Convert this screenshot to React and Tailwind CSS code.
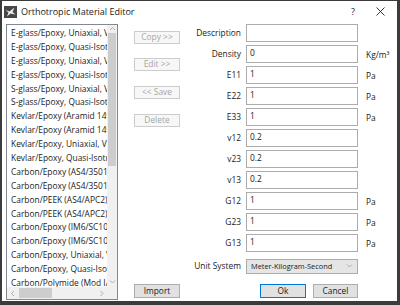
import React from 'react'

const materials = [
  'E-glass/Epoxy, Uniaxial, Vf=0.55',
  'E-glass/Epoxy, Quasi-Isotropic',
  'E-glass/Epoxy, Uniaxial, Vf=0.45',
  'E-glass/Epoxy, Quasi-Isotropic',
  'S-glass/Epoxy, Uniaxial, Vf=0.50',
  'S-glass/Epoxy, Quasi-Isotropic',
  'Kevlar/Epoxy (Aramid 149/Epoxy)',
  'Kevlar/Epoxy (Aramid 149/Epoxy)',
  'Kevlar/Epoxy, Uniaxial, Vf=0.60',
  'Kevlar/Epoxy, Quasi-Isotropic',
  'Carbon/Epoxy (AS4/3501-6)',
  'Carbon/Epoxy (AS4/3501-6)',
  'Carbon/PEEK (AS4/APC2), Uniaxial',
  'Carbon/PEEK (AS4/APC2), Quasi',
  'Carbon/Epoxy (IM6/SC1081)',
  'Carbon/Epoxy (IM6/SC1081)',
  'Carbon/Epoxy, Uniaxial, Vf=0.60',
  'Carbon/Epoxy, Quasi-Isotropic',
  'Carbon/Polymide (Mod I/WR-6)',
]

const fields = [
  { label: 'Description', value: '', unit: '' },
  { label: 'Density', value: '0', unit: 'Kg/m³' },
  { label: 'E11', value: '1', unit: 'Pa' },
  { label: 'E22', value: '1', unit: 'Pa' },
  { label: 'E33', value: '1', unit: 'Pa' },
  { label: 'v12', value: '0.2', unit: '' },
  { label: 'v23', value: '0.2', unit: '' },
  { label: 'v13', value: '0.2', unit: '' },
  { label: 'G12', value: '1', unit: 'Pa' },
  { label: 'G23', value: '1', unit: 'Pa' },
  { label: 'G13', value: '1', unit: 'Pa' },
]

function Chevron({ dir }) {
  const d = {
    up: 'M1 4 L3.5 1.5 L6 4',
    down: 'M1 1.5 L3.5 4 L6 1.5',
    left: 'M4 1 L1.5 3.5 L4 6',
    right: 'M1.5 1 L4 3.5 L1.5 6',
  }[dir]
  return (
    <svg width="7" height="7" viewBox="0 0 7 7" fill="none" stroke="#a3a3a3" strokeWidth="0.9">
      <path d={d} />
    </svg>
  )
}

function DisabledButton({ children, className }) {
  return (
    <div className={`h-[13px] flex items-center justify-center border border-[#cccccc] bg-[#f7f7f7] text-[#a6a6a6] ${className}`}>
      {children}
    </div>
  )
}

export default function App() {
  return (
    <div className="w-[400px] h-[305px] bg-white border-[#3b3b3b] border-l-2 border-r-[3px] border-t border-b-[4px] flex flex-col overflow-hidden font-['Open_Sans',sans-serif] text-[8.4px] text-[#1a1a1a]">
      {/* title bar */}
      <div className="h-[21px] flex items-center shrink-0">
        <svg className="ml-[2px]" width="13" height="12" viewBox="0 0 13 12">
          <rect width="13" height="12" fill="#474747" />
          <path d="M1.5 4 L5.5 5.5 L10.5 1.5 L8.5 6 L11.5 8.5 L6.5 7.5 L3 10.5 L4.5 6.5 Z" fill="#f0f0f0" />
        </svg>
        <span className="ml-[4px] text-[9px]">Orthotropic Material Editor</span>
        <span className="ml-auto text-[9px]">?</span>
        <svg className="ml-[21px] mr-[12px]" width="9" height="9" viewBox="0 0 9 9" stroke="#222" strokeWidth="0.9">
          <path d="M0.5 0.5 L8.5 8.5 M8.5 0.5 L0.5 8.5" />
        </svg>
      </div>

      {/* body */}
      <div className="flex flex-1 min-h-0 pt-[2px] pl-[4px] pb-[1px]">
        {/* material list */}
        <div className="w-[112px] h-full border border-[#828790] flex flex-col">
          <div className="flex flex-1 min-h-0">
            <div className="flex-1 overflow-hidden pt-[1px] pl-[4px]">
              {materials.map((m, i) => (
                <div key={i} className="h-[13.9px] leading-[13.9px] whitespace-nowrap">
                  {m}
                </div>
              ))}
            </div>
            <div className="w-[10px] bg-[#f0f0f0] flex flex-col items-center">
              <div className="h-[8px] flex items-center">
                <Chevron dir="up" />
              </div>
              <div className="h-[133px] w-[8px] bg-[#cdcdcd]" />
              <div className="flex-1" />
              <div className="h-[10px] flex items-center">
                <Chevron dir="down" />
              </div>
            </div>
          </div>
          <div className="h-[12px] flex bg-[#f0f0f0]">
            <div className="w-[12px] flex items-center justify-center">
              <Chevron dir="left" />
            </div>
            <div className="w-[33px] my-[1px] bg-[#cdcdcd]" />
            <div className="flex-1" />
            <div className="w-[10px] flex items-center justify-center">
              <Chevron dir="right" />
            </div>
            <div className="w-[10px]" />
          </div>
        </div>

        {/* action buttons */}
        <div className="ml-[16px] w-[46px] flex flex-col">
          <DisabledButton className="mt-[7px]">Copy &gt;&gt;</DisabledButton>
          <DisabledButton className="mt-[14px]">Edit &gt;&gt;</DisabledButton>
          <DisabledButton className="mt-[15px]">&lt;&lt; Save</DisabledButton>
          <DisabledButton className="mt-[15px]">Delete</DisabledButton>
          <div className="mt-auto mb-[2px] h-[14px] flex items-center justify-center border border-[#adadad] bg-[#e1e1e1]">
            Import
          </div>
        </div>

        {/* property form */}
        <div className="flex flex-col flex-1">
          {fields.map((f) => (
            <div key={f.label} className="h-[18px] mb-[3px] flex items-center">
              <div className="w-[61px] text-right">{f.label}</div>
              <div className="ml-[5px] w-[112px] h-full border border-[#acacac] pl-[3px] pt-[1px] leading-[12px]">
                {f.value}
              </div>
              <div className="ml-[8px] mt-[3px]">{f.unit}</div>
            </div>
          ))}
          <div className="mt-[4px] h-[15px] flex items-center">
            <div className="w-[61px] text-right whitespace-nowrap">Unit System</div>
            <div className="ml-[5px] w-[112px] h-full border border-[#acacac] bg-[#e5e5e5] flex items-center pl-[4px] pr-[4px]">
              <span className="text-[7.4px]">Meter-Kilogram-Second</span>
              <span className="ml-auto">
                <Chevron dir="down" />
              </span>
            </div>
          </div>
          <div className="mt-auto mb-[2px] h-[14px] flex">
            <div className="ml-[80px] w-[46px] flex items-center justify-center border border-[#0078d7] bg-[#e1e1e1]">
              Ok
            </div>
            <div className="ml-[7px] w-[45px] flex items-center justify-center border border-[#adadad] bg-[#e1e1e1]">
              Cancel
            </div>
          </div>
        </div>
      </div>
    </div>
  )
}
